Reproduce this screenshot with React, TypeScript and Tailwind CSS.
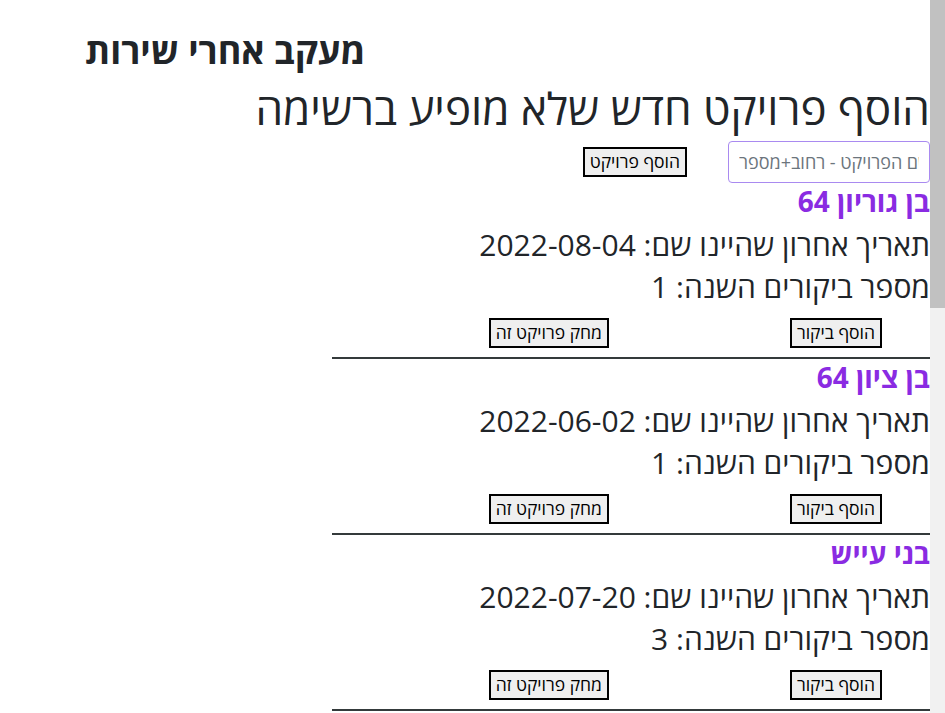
import React from 'react';

interface Project {
  name: string;
  lastVisit: string;
  visits: number;
}

const projects: Project[] = [
  { name: 'בן גוריון 64', lastVisit: '2022-08-04', visits: 1 },
  { name: 'בן ציון 64', lastVisit: '2022-06-02', visits: 1 },
  { name: 'בני עייש', lastVisit: '2022-07-20', visits: 3 },
  { name: 'הרצל 12', lastVisit: '2022-05-15', visits: 2 },
  { name: 'ויצמן 8', lastVisit: '2022-04-11', visits: 1 },
  { name: 'רוטשילד 30', lastVisit: '2022-03-28', visits: 4 },
  { name: 'ז׳בוטינסקי 5', lastVisit: '2022-02-09', visits: 2 },
  { name: 'סוקולוב 17', lastVisit: '2022-01-22', visits: 1 },
];

const btn = 'h-[30px] border-2 border-black bg-[#efefef] px-[5px] text-[17.5px] leading-none text-black';

const ProjectItem: React.FC<{ project: Project }> = ({ project }) => (
  <div className="w-[598px] border-b-2 border-[#343a3b] pb-[9px]">
    <h3 className="text-[28px] font-bold leading-[36px] text-[#8a2be2]">{project.name}</h3>
    <p className="mt-[5px] text-[30px] leading-[42px]">תאריך אחרון שהיינו שם: {project.lastVisit}</p>
    <p className="text-[30px] leading-[42px]">מספר ביקורים השנה: {project.visits}</p>
    <div className="mt-[10px] flex items-center gap-[181px] pr-[48px]">
      <button className={btn}>הוסף ביקור</button>
      <button className={btn}>מחק פרויקט זה</button>
    </div>
  </div>
);

export default function App() {
  return (
    <div className="flex h-screen overflow-hidden bg-white">
      <div dir="rtl" className="min-w-0 flex-1 font-['Open_Sans',sans-serif] text-[#212529]">
        <div className="flex justify-end pl-[85px] pt-[29px]">
          <h1 className="text-[36px] font-bold leading-[44px]">מעקב אחרי שירות</h1>
        </div>
        <h2 className="mt-[9px] text-[44px] leading-[52px]">הוסף פרויקט חדש שלא מופיע ברשימה</h2>
        <div className="mt-[7px] flex items-center gap-[41px]">
          <input
            type="text"
            dir="ltr"
            placeholder="שם הפרויקט - רחוב+מספר"
            className="h-[42px] w-[202px] rounded-[4px] border border-[#a98af0] px-[10px] text-left text-[18px] placeholder:text-[#6c757d] outline-none"
          />
          <button className={btn}>הוסף פרויקט</button>
        </div>
        <div>
          {projects.map((p) => (
            <ProjectItem key={p.name} project={p} />
          ))}
        </div>
      </div>
      {/* scrollbar */}
      <div className="w-[15px] shrink-0 bg-[#f1f1f1]">
        <div className="h-[308px] bg-[#c1c1c1]" />
      </div>
    </div>
  );
}
